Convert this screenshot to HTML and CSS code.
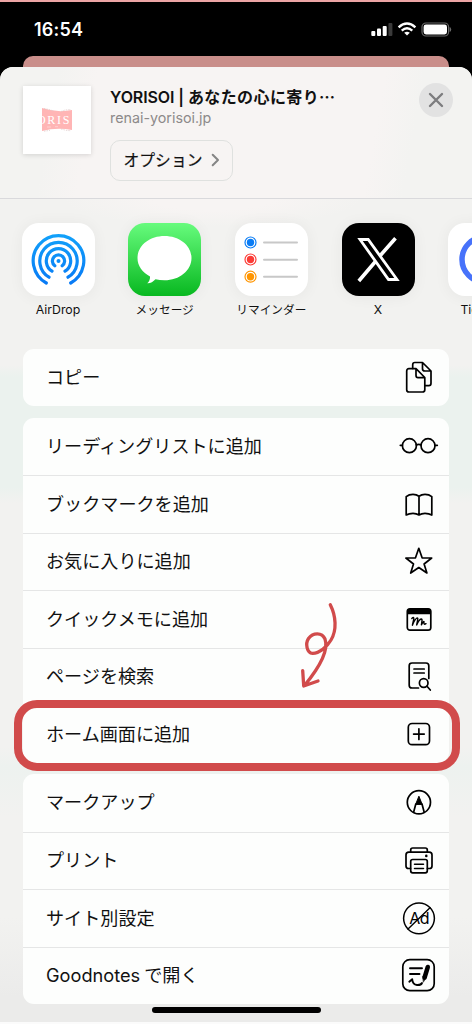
FILE: index.html
```html
<!DOCTYPE html>
<html lang="ja">
<head>
<meta charset="utf-8">
<title>YORISOI</title>
<link rel="stylesheet" href="styles.css">
</head>
<body>
<div class="phone">
  <header class="status">
    <span class="time">16:54</span>
    <svg class="status-icons" width="84" height="20" viewBox="0 0 84 20">
      <g fill="#fff"><rect x="0.3" y="11" width="4" height="5" rx="1"/><rect x="6" y="8.6" width="4" height="7.4" rx="1"/><rect x="11.7" y="6" width="4" height="10" rx="1"/><rect x="17.4" y="3" width="4" height="13" rx="1" fill="#3a3a3a"/></g>
      <g fill="none" stroke="#fff" stroke-width="2.4"><path d="M27.6 7.3Q36 -.2 44.4 7.3"/><path d="M30.7 10.6Q36 6 41.3 10.6"/></g>
      <path d="M33.2 12.7Q36 10.6 38.8 12.7L36 15.6Z" fill="#fff"/>
      <rect x="51" y="3" width="26.6" height="13" rx="4" fill="none" stroke="#666" stroke-width="1.2"/>
      <rect x="52.6" y="4.6" width="23.4" height="9.8" rx="2.4" fill="#fff"/>
      <path d="M79 7.5q1.6 2 0 4z" fill="#777" stroke="#777" stroke-width=".6"/>
    </svg>
  </header>
  <div class="behind"></div>
  <main class="sheet">
    <section class="page-info">
      <div class="thumb">
        <svg width="32" height="26" viewBox="0 0 32 26">
          <path d="M1 1Q16 6 31 3V23Q16 20 1 24Z" fill="#ffb5b5"/>
          <path d="M3 1.5l5 1 5 1.6M20 4.5l4-1.5 6-.5M3 24.2l6-.8M20 22l5 1.3 5 .5" fill="none" stroke="#ddc9c9" stroke-width=".7" stroke-dasharray="1.5 1"/>
          <text class="thumb-text" x="-4" y="17.4">ORIS</text>
          <path d="M6 20h4M14 19.7h3" stroke="#fff" stroke-width=".6" opacity=".6"/>
        </svg>
      </div>
      <div class="details">
        <h1 class="title">YORISOI | <span class="title-ja">あなたの心に寄り…</span></h1>
        <p class="domain">renai-yorisoi.jp</p>
        <button class="options">オプション<svg width="9" height="14" viewBox="0 0 9 14"><path d="M1.7 1.7 7 7l-5.300 5.300" fill="none" stroke="#858585" stroke-width="2" stroke-linecap="round" stroke-linejoin="round"/></svg></button>
      </div>
      <button class="close"><svg width="16" height="16" viewBox="0 0 16 16"><path d="M2 2l12 12M14 2L2 14" stroke="#7d7d7f" stroke-width="2.4" stroke-linecap="round"/></svg></button>
    </section>

    <section class="apps">
      <div class="app">
        <div class="app-icon">
          <svg width="73" height="73" viewBox="0 0 73 73"><defs><linearGradient id="air" gradientUnits="userSpaceOnUse" x1="0" y1="10" x2="0" y2="62"><stop offset="0" stop-color="#12a2fa"/><stop offset="1" stop-color="#0879f5"/></linearGradient></defs>
          <g fill="none" stroke="url(#air)" stroke-width="3.2" stroke-linecap="round"><path d="M24.300 60A25.300 25.300 0 1 1 48.700 60"/><path d="M27 54.200A18.700 18.700 0 1 1 46 54.200"/><path d="M30 48.200A12.200 12.200 0 1 1 43 48.200"/><path d="M32.800 42.800A6.100 6.100 0 1 1 40.200 42.800"/></g><circle cx="36.500" cy="38" r="2" fill="#0b8df7"/></svg>
        </div><span class="app-name latin">AirDrop</span>
      </div>
      <div class="app">
        <div class="app-icon messages">
          <svg width="73" height="73" viewBox="0 0 73 73"><path d="M36.500 13C51.500 13 63.500 22.500 63.500 35S51.500 57.300 36.500 57.300Q31.500 57.300 27.500 56.200C25.200 58.700 22 60.500 19.300 60.200C21.300 58.200 22.200 56 22 53.500C14.500 49.300 9.500 43 9.500 35C9.500 22.500 21.500 13 36.500 13Z" fill="#fff"/></svg>
        </div><span class="app-name">メッセージ</span>
      </div>
      <div class="app">
        <div class="app-icon">
          <svg width="73" height="73" viewBox="0 0 73 73"><g fill="none" stroke-width="1.200"><circle cx="15.500" cy="19.500" r="5.500" stroke="#0a7cf5"/><circle cx="15.500" cy="36.500" r="5.500" stroke="#fb3c36"/><circle cx="15.500" cy="53.700" r="5.500" stroke="#ff9500"/></g><circle cx="15.500" cy="19.500" r="3.700" fill="#0a7cf5"/><circle cx="15.500" cy="36.500" r="3.700" fill="#fb3c36"/><circle cx="15.500" cy="53.700" r="3.700" fill="#ff9500"/><path d="M29 19.500h33M29 36.700h33M29 53.700h33" stroke="#c8c8c8" stroke-width="2" stroke-linecap="round"/></svg>
        </div><span class="app-name">リマインダー</span>
      </div>
      <div class="app">
        <div class="app-icon x-app">
          <svg width="73" height="73" viewBox="0 0 73 73"><path d="M53.500 15.300L38.300 32.500M33 39L16.800 58" stroke="#fff" stroke-width="3.600"/><path d="M18 16.500H26.200L55 56.500H46.500Z" fill="#000" stroke="#fff" stroke-width="2.800"/></svg>
        </div><span class="app-name latin">X</span>
      </div>
      <div class="app">
        <div class="app-icon">
          <svg width="73" height="73" viewBox="0 0 73 73"><circle cx="36.500" cy="36.500" r="22.500" fill="none" stroke="#4772fa" stroke-width="5.500"/></svg>
        </div><span class="app-name latin">TickTick</span>
      </div>
    </section>

    <section class="actions">
      <ul class="group">
        <li class="row">コピー<svg class="icon" viewBox="0 0 40 40"><path d="M13.700 11.500V7.700Q13.700 5.500 15.900 5.500H23.500L32 14V26.300Q32 28.700 29.800 28.700H26M23.500 5.500V11.700Q23.500 14 25.800 14H32"/><path d="M17 11.700H10Q7.700 11.700 7.700 14V32.700Q7.700 35 10 35H23.500Q25.800 35 25.800 32.700V20.500L17 11.700V18.300Q17 20.700 19 20.700H25.800"/></svg></li>
      </ul>
      <ul class="group">
        <li class="row">リーディングリストに追加<svg class="icon" viewBox="0 0 40 40"><circle cx="10.400" cy="19.700" r="7"/><circle cx="29" cy="19.700" r="7"/><path d="M17.300 18.900Q19.700 17.900 22.100 18.900M1.300 19.300H3.400M36 19.300H38.300"/></svg></li>
        <li class="row">ブックマークを追加<svg class="icon" viewBox="0 0 40 40"><path d="M20 12.200Q17.500 10.300 14 10.300Q10 10.300 7.200 12.600V31Q10 29.300 14 29.300Q17.500 29.300 20 31Q22.500 29.300 26 29.300Q30 29.300 32.800 31V12.600Q30 10.300 26 10.300Q22.500 10.300 20 12.200V31"/></svg></li>
        <li class="row">お気に入りに追加<svg class="icon" viewBox="0 0 40 40"><path d="M19.800 7.300L23.100 16.800L32.700 17L25.100 23L27.900 32L19.800 26.500L11.700 32L14.500 23L6.900 17L16.500 16.800Z"/></svg></li>
        <li class="row">クイックメモに追加<svg class="icon" viewBox="0 0 40 40"><rect x="8.300" y="9.800" width="23.500" height="21.300" rx="2.700"/><path d="M9 14.500V12Q9 10.500 10.500 10.500H29.700Q31.200 10.500 31.200 12V14.500Z" fill="#000"/><path stroke-width="1.400" d="M12.800 19.500Q15 17.300 14.800 20L13.400 26.200Q15.800 20.300 18 19Q19.300 18.600 18.500 21.600L17.700 26Q20 20.500 22.200 20Q23.500 20 22.800 23L22.400 25.800Q24.600 22 25 22.600Q24.400 26.300 27 24.700"/></svg></li>
        <li class="row">ページを検索<svg class="icon" viewBox="0 0 40 40"><path d="M19.500 32H13Q10.200 32 10.200 29.200V9.800Q10.200 7 13 7H27Q29.800 7 29.800 9.800V22.500M15 13H25.200M15 17H25.200"/><circle cx="24.700" cy="27" r="4.300"/><path d="M28 30.300L31.300 34"/></svg></li>
        <li class="row marked">ホーム画面に追加<svg class="icon" viewBox="0 0 40 40"><rect x="9.300" y="9.500" width="21.200" height="21.200" rx="3.800"/><path d="M19.900 14.800V25.400M14.600 20.100H25.200"/></svg>
          <span class="highlight"></span>
          <svg class="arrow" width="48" height="96" viewBox="0 0 48 96"><path d="M36.300 6.700C42 18 43 32 37 42C33 49 25 55.500 18.500 55.300C13 55 11 46 14.500 40.500C19 34.300 28 34 31 41C34.500 51 29 65 10.500 87.500M8.700 72.700L9.700 88L24 83"/></svg>
        </li>
      </ul>
      <ul class="group">
        <li class="row">マークアップ<svg class="icon" viewBox="0 0 40 40"><circle cx="19.900" cy="20.300" r="11.600"/><path d="M14.600 30.300L16.800 22H23L25.200 30.300"/><path d="M16.800 22L19.900 14.200L23 22Z" fill="#000" stroke-width="1"/></svg></li>
        <li class="row">プリント<svg class="icon" viewBox="0 0 40 40"><path d="M11.500 28.500H9.500Q7 28.500 7 26V15Q7 12.200 9.800 12.200H30.200Q33 12.200 33 15V26Q33 28.500 30.500 28.500H28.500M11.700 12.200V10Q11.700 8 13.700 8H26.300Q28.300 8 28.300 10V12.200"/><rect x="11.700" y="19.500" width="16.600" height="13.300" rx="2"/><path d="M15.500 24.300H24.500M15.500 28.500H24.500" stroke-width="1.500"/><circle cx="27.300" cy="15.900" r="1.300" fill="#000" stroke="none"/></svg></li>
        <li class="row">サイト別設定<svg class="icon" viewBox="0 0 40 40"><circle cx="20" cy="20.300" r="15.400" stroke-width="1.500"/><text class="ad" x="10.300" y="25.800">Ad</text><path d="M9 31L31 9.700" stroke-width="1.400"/></svg></li>
        <li class="row"><span><span class="goodnotes">Goodnotes</span> で開く</span><svg class="icon" viewBox="0 0 40 40"><rect x="3.800" y="4.700" width="31.400" height="31" rx="7"/><path d="M11 13.300H23M11 19H20.500M10.300 26.700L13.200 24.200Q13.600 29.500 18 30Q22 30.200 23 28" stroke-width="1.900"/><path d="M28.800 12L25.600 22.500" stroke-width="4.500"/><path d="M23.800 21.500L27.200 22.600L24.500 27Z" fill="#000" stroke-width=".5"/></svg></li>
      </ul>
    </section>
    <div class="home-bar"></div>
  </main>
</div>
</body>
</html>
```
FILE: styles.css
```css
* { box-sizing: border-box; }
body { margin: 0; background: #fff; color: #111; font-family: Inter, "Noto Sans CJK JP", sans-serif; }
.phone { width: 472px; height: 1024px; overflow: hidden; background: #000; border-top: 2px solid #eca5a5; display: flex; flex-direction: column; }
.status { height: 54px; flex: none; display: flex; justify-content: space-between; align-items: flex-start; padding: 16px 17px 0 34px; }
.time { color: #fff; font-size: 18px; line-height: 24px; font-weight: 600; letter-spacing: .2px; }
.status-icons { margin-top: 2px; }
.behind { height: 11px; flex: none; margin: 0 23px; background: #c98e8a; border-radius: 10px 10px 0 0; }
.sheet { height: 957px; flex: none; border-radius: 13px 13px 0 0; overflow: hidden; display: flex; flex-direction: column; background: linear-gradient(#f2f2f0 298px, #ebf2ee 310px, #ebf2ee 420px, #f2f2f0 436px, #f2f2f0 680px, #edf2ef 700px, #f2f2f0 750px, #f2f2f0 850px, #ebebea 930px); border-bottom: 2px solid #fbfbfb; }
.page-info { height: 132px; flex: none; display: flex; align-items: flex-start; padding: 0 19px 0 23px; border-bottom: 1px solid #d9d9dc; background: linear-gradient(100deg, #f3f3f1 12%, #f7f4f3 20%, #f7f4f3 78%, #f3f3f1 86%); }
.thumb { width: 68px; height: 68px; margin-top: 19px; background: #fff; box-shadow: 0 1px 5px #00000024; display: flex; align-items: center; justify-content: center; }
.thumb svg { overflow: hidden; }
.thumb-text { font: 12px "Liberation Serif", serif; letter-spacing: 1.700px; fill: #fff; }
.details { flex: 1; margin: 17px 0 0 19px; }
.title { margin: 0; font-size: 16px; line-height: 24px; font-weight: 600; letter-spacing: -.1px; white-space: nowrap; }
.title-ja { font-family: "Noto Sans CJK JP", sans-serif; letter-spacing: .4px; }
.domain { margin: -1px 0 0; font-size: 14.300px; line-height: 20px; color: #8d8a8a; }
.options { margin: 12px 0 0; width: 123px; height: 41px; border: 1px solid #dfe1df; border-radius: 10px; background: transparent; padding: 0 0 2px; display: flex; align-items: center; justify-content: center; gap: 8px; color: #111; font: 400 15.800px "Noto Sans CJK JP", sans-serif; -webkit-text-stroke: .2px #111; }
.close { width: 34px; height: 34px; margin-top: 16px; padding: 0; border: 0; border-radius: 50%; background: #e2e2e2; display: flex; align-items: center; justify-content: center; }
.apps { height: 149.500px; flex: none; display: flex; gap: 33.700px; padding: 24px 0 0 21.500px; background: radial-gradient(ellipse 150px 28px at 45% 0, #f7f4f3 40%, transparent 100%); }
.app { width: 73px; flex: none; display: flex; flex-direction: column; align-items: center; }
.app-icon { width: 73px; height: 73px; border-radius: 17px; background: #fff; overflow: hidden; box-shadow: 0 1px 14px 2px #0000000a; }
.app-icon svg { display: block; }
.messages { background: linear-gradient(#67fb7d, #08b820); }
.x-app { background: #000; }
.app-name { margin-top: 3px; font: 11.700px/19px "Noto Sans CJK JP", sans-serif; white-space: nowrap; }
.latin { margin-top: 4px; font-family: Inter, sans-serif; font-size: 12.300px; }
.actions { padding: 0 23px; display: flex; flex-direction: column; gap: 11.500px; }
.group { list-style: none; margin: 0; padding: 0; background: #fdfefd; border-radius: 11px; }
.row { position: relative; height: 57.500px; padding: 0 10px 3px 23px; display: flex; align-items: center; justify-content: space-between; font: 18.100px/26px "Noto Sans CJK JP", sans-serif; }
.row + .row { border-top: 1px solid #e5e6e6; }
.goodnotes { font-family: Inter, sans-serif; font-size: 18.200px; }
.icon { position: relative; top: 1px; width: 40px; height: 40px; flex: none; fill: none; stroke: #000; stroke-width: 1.700; stroke-linecap: round; stroke-linejoin: round; }
.ad { font: 16px Inter, sans-serif; letter-spacing: -.7px; fill: #000; stroke: none; }
.highlight { position: absolute; left: -9px; right: -11px; top: -6.500px; bottom: -8px; border: 8px solid #d14b4b; border-radius: 23px; z-index: 1; }
.arrow { position: absolute; left: 271px; top: -108px; z-index: 2; fill: none; stroke: #d14b4b; stroke-width: 3.300; stroke-linecap: round; stroke-linejoin: round; }
.home-bar { width: 169px; height: 6px; border-radius: 3px; background: #000; margin: 2.500px auto 0; }
```
